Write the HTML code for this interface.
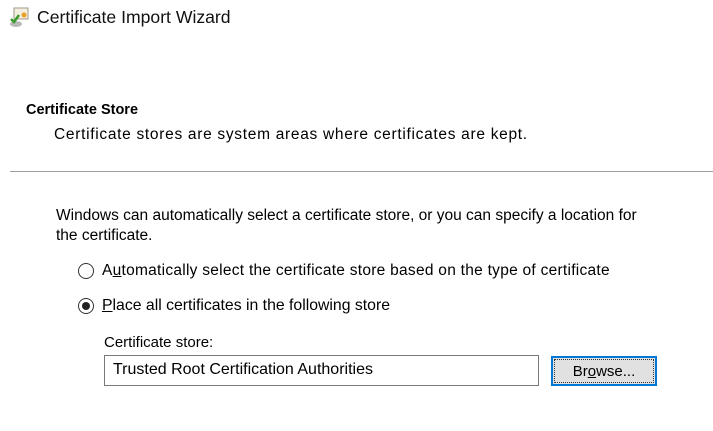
<!DOCTYPE html><html><head><style>
body{margin:0;width:713px;height:431px;background:#fff;font-family:"Liberation Sans",sans-serif;font-size:15.5px;color:#000;position:relative;overflow:hidden}
.a{position:absolute;white-space:nowrap}
.r{position:absolute;width:16px;height:16px;border:1px solid #333;border-radius:50%;box-sizing:border-box}
</style></head><body>
<svg class="a" style="left:8px;top:7px" width="22" height="22" viewBox="0 0 22 22"><rect x="6" y="1" width="14" height="11" fill="#f4eee0" stroke="#a09a88"/><circle cx="16" cy="8" r="2.5" fill="#e8a020"/><ellipse cx="8" cy="17" rx="6" ry="3" fill="#b8b8b8"/><path d="M3 12l3 3 5-7" stroke="#3a9a30" stroke-width="2.5" fill="none"/></svg>
<div class="a" style="left:37px;top:7px;font-size:17.6px;color:#111">Certificate Import Wizard</div>
<div class="a" style="left:26px;top:102px;font-weight:bold;font-size:14.5px">Certificate Store</div>
<div class="a" style="left:54px;top:126px;letter-spacing:0.7px">Certificate stores are system areas where certificates are kept.</div>
<div class="a" style="left:10px;top:171px;width:703px;height:1px;background:#a0a0a0"></div>
<div class="a" style="left:56px;top:207px">Windows can automatically select a certificate store, or you can specify a location for</div>
<div class="a" style="left:56px;top:227px">the certificate.</div>
<div class="r" style="left:78px;top:263px"></div>
<div class="a" style="left:102px;top:262px;letter-spacing:0.27px">A<u>u</u>tomatically select the certificate store based on the type of certificate</div>
<div class="r" style="left:78px;top:298px"><div style="position:absolute;left:3px;top:3px;width:8px;height:8px;border-radius:50%;background:#222"></div></div>
<div class="a" style="left:102px;top:297px;font-size:15.8px"><u>P</u>lace all certificates in the following store</div>
<div class="a" style="left:104px;top:334px;font-size:15px">Certificate store:</div>
<div class="a" style="left:104px;top:355px;width:435px;height:31px;border:1px solid #7a7a7a;box-sizing:border-box;padding:5px 0 0 8px;font-size:16px">Trusted Root Certification Authorities</div>
<div class="a" style="left:551px;top:356px;width:106px;height:30px;border:2px solid #0078d7;background:#e1e1e1;box-sizing:border-box;text-align:center;padding-top:5px;outline:1px dotted #333;outline-offset:-4px;font-size:15px">Br<u>o</u>wse...</div>
</body></html>
